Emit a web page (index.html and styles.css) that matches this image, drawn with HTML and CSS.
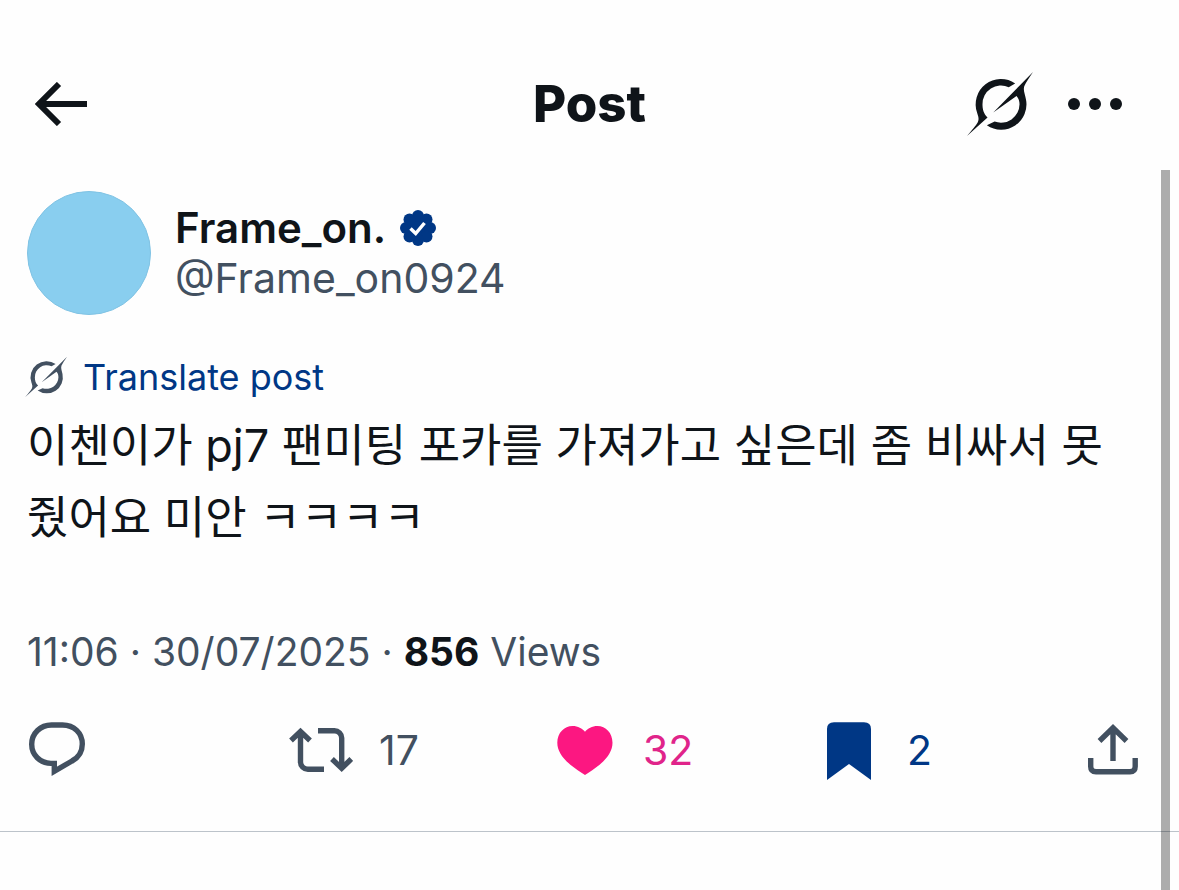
FILE: index.html
```html
<!DOCTYPE html>
<html lang="en">
<head>
    <meta charset="UTF-8">
    <meta name="viewport" content="width=device-width, initial-scale=1.0">
    <title>Post</title>
    <link rel="stylesheet" href="styles.css">
</head>
<body>
    <svg class="sprite" aria-hidden="true">
        <symbol id="slash-ring" viewBox="82 37 196 190">
            <path d="M225 71A75 75 0 0 0 112 158C115 168 119 176 114 186C109 195 96 210 82 227L143 172C131 161 128 147 128 133A55 55 0 0 1 206 82Z"/>
            <path d="M278 37L160 157L229 108C236 115 238 124 238 133A55 55 0 0 1 164 184L141 195A75 75 0 0 0 257 118C255 104 248 92 252 79C257 68 266 55 278 37Z"/>
        </symbol>
    </svg>

    <header>
        <button class="icon-button" aria-label="Back">
            <svg class="back-icon" viewBox="0 0 52 44"><path d="M4 22H52M24 2L4 22L24 42"/></svg>
        </button>
        <h1>Post</h1>
        <div class="header-actions">
            <button class="icon-button" aria-label="Explain this post">
                <svg class="ring-icon"><use href="#slash-ring"/></svg>
            </button>
            <button class="icon-button" aria-label="More">
                <svg class="more-icon" viewBox="0 0 54 12"><circle cx="6" cy="6" r="6"/><circle cx="27" cy="6" r="6"/><circle cx="48" cy="6" r="6"/></svg>
            </button>
        </div>
    </header>

    <main>
        <article class="post">
            <div class="author">
                <div class="avatar"></div>
                <div class="author-info">
                    <div class="name-row">
                        <span class="name">Frame_on.</span>
                        <svg class="badge" viewBox="0 0 36 36" role="img" aria-label="Verified">
                            <circle cx="18" cy="18" r="14"/>
                            <circle cx="18" cy="6" r="6"/><circle cx="26.5" cy="9.5" r="6"/>
                            <circle cx="30" cy="18" r="6"/><circle cx="26.5" cy="26.5" r="6"/>
                            <circle cx="18" cy="30" r="6"/><circle cx="9.5" cy="26.5" r="6"/>
                            <circle cx="6" cy="18" r="6"/><circle cx="9.5" cy="9.5" r="6"/>
                            <path d="M10.5 18.5L15.7 23.5L24.5 13"/>
                        </svg>
                    </div>
                    <a class="handle" href="#">@Frame_on0924</a>
                </div>
            </div>

            <button class="translate">
                <svg class="translate-icon"><use href="#slash-ring"/></svg>
                <span>Translate post</span>
            </button>

            <p class="post-text" lang="ko">이첸이가 pj7 팬미팅 포카를 가져가고 싶은데 좀 비싸서 못 줬어요 미안 ㅋㅋㅋㅋ</p>

            <p class="meta">11:06 · 30/07/2025 · <strong>856</strong> Views</p>
        </article>

        <div class="actions">
            <button class="action" aria-label="Reply">
                <svg viewBox="0 0 64 64"><path d="M26.5 7H37.5C49 7 57.3 15 57.3 26C57.3 33.5 53.5 39.5 47 43L29.3 53.3V45.4H26C15 45.2 6.7 37 6.7 26.3C6.7 15.2 15.5 7 26.5 7Z"/></svg>
            </button>
            <button class="action" aria-label="Repost">
                <svg viewBox="0 0 64 64"><path d="M2 22.5L11.5 13.5L21 22.5M11.5 14V44A7.3 7.3 0 0 0 18.8 51.3H35M29 12.7H45.4A7.3 7.3 0 0 1 52.7 20V50M43 41L52.7 50.3L62.3 41"/></svg>
                <span>17</span>
            </button>
            <button class="action liked" aria-label="Like">
                <svg viewBox="0 0 64 64"><path d="M32 57L28.5 54.7C12.5 44.5 4.3 35 4.3 24.7C4.3 14.8 11.3 8 19.5 8C25 8 29.3 10.5 32 13.8C34.7 10.5 39 8 44.5 8C52.7 8 59.5 14.8 59.5 24.7C59.5 35 51.5 44.5 35.5 54.7Z"/></svg>
                <span>32</span>
            </button>
            <button class="action saved" aria-label="Bookmark">
                <svg viewBox="0 0 64 64"><path d="M10 62V11Q10 4.3 17 4.3H47Q54 4.3 54 11V62L32 46Z"/></svg>
                <span>2</span>
            </button>
            <button class="action" aria-label="Share">
                <svg viewBox="0 0 64 64"><path d="M9.7 40V48.5Q9.7 53.7 15 53.7H49Q54.2 53.7 54.2 48.5V40M32 43V10M18.5 23L32 9.8L45.5 23"/></svg>
            </button>
        </div>
    </main>

    <div class="scrollbar"></div>
</body>
</html>
```

FILE: styles.css
```css
:root {
    --text-color: #0f1419;
    --muted-color: #425060;
    --blue: #003785;
    --pink: #fc1781;
}

* {
    box-sizing: border-box;
}

body {
    margin: 0;
    min-height: 100vh;
    position: relative;
    background-color: #fefefe;
    color: var(--text-color);
    font-family: Inter, "Noto Sans CJK KR", sans-serif;
    font-size: 41px;
}

button {
    padding: 0;
    border: none;
    background: none;
    font: inherit;
    color: inherit;
    cursor: pointer;
}

svg {
    display: block;
    flex-shrink: 0;
}

.sprite {
    position: absolute;
    width: 0;
    height: 0;
}

header {
    display: grid;
    grid-template-columns: 1fr auto 1fr;
    align-items: center;
    height: 170px;
    padding: 38px 35px 0;
}

h1 {
    margin: 0;
    font-size: 51px;
    font-weight: 800;
    line-height: 60px;
}

.icon-button {
    justify-self: start;
}

.back-icon {
    width: 52px;
    height: 44px;
    fill: none;
    stroke: var(--text-color);
    stroke-width: 6;
}

.header-actions {
    display: flex;
    align-items: center;
    justify-content: flex-end;
    gap: 35px;
    padding-right: 22px;
}

.ring-icon {
    width: 66px;
    height: 64px;
    fill: var(--text-color);
}

.more-icon {
    width: 54px;
    height: 12px;
    fill: var(--text-color);
}

.post {
    padding: 21px 48px 0 27px;
}

.author {
    display: flex;
    align-items: center;
    gap: 24px;
}

.avatar {
    width: 124px;
    height: 124px;
    border-radius: 50%;
    background-color: #89ceef;
    border: 1px solid #80c3e4;
}

.author-info {
    line-height: 51px;
}

.name-row {
    display: flex;
    align-items: center;
    gap: 14px;
}

.name {
    font-size: 42px;
    font-weight: 600;
}

.badge {
    width: 36px;
    height: 36px;
    fill: var(--blue);
}

.badge path {
    fill: none;
    stroke: #fff;
    stroke-width: 3.5;
}

.handle {
    display: block;
    color: var(--muted-color);
    text-decoration: none;
}

.translate {
    display: flex;
    align-items: center;
    gap: 16px;
    margin: 40px 0 0 -2px;
    color: var(--blue);
    font-size: 36px;
    line-height: 44px;
}

.translate-icon {
    width: 42px;
    height: 42px;
    fill: var(--muted-color);
}

.post-text {
    margin: 11px 0 0;
    font-size: 45px;
    line-height: 72px;
}

.meta {
    margin: 74px 0 0;
    color: var(--muted-color);
    font-size: 39px;
    line-height: 48px;
}

.meta strong {
    color: var(--text-color);
    font-weight: 700;
}

.actions {
    display: grid;
    grid-template-columns: repeat(4, 1fr) 64px;
    padding: 42px 34px 49px 25px;
    border-bottom: 1px solid #bcc3ca;
}

.action {
    display: flex;
    align-items: center;
    gap: 26px;
    color: var(--muted-color);
    line-height: 64px;
}

.action svg {
    width: 64px;
    height: 64px;
    fill: none;
    stroke: currentColor;
    stroke-width: 5.4;
}

.liked {
    color: #e0248a;
}

.saved {
    color: var(--blue);
}

.liked svg,
.saved svg {
    fill: currentColor;
    stroke: none;
}

.liked svg {
    color: var(--pink);
}

/* scroll indicator over the right edge */
.scrollbar {
    position: absolute;
    top: 170px;
    right: 9px;
    bottom: 0;
    width: 9px;
    background-color: rgba(0, 0, 0, 0.32);
}
```
